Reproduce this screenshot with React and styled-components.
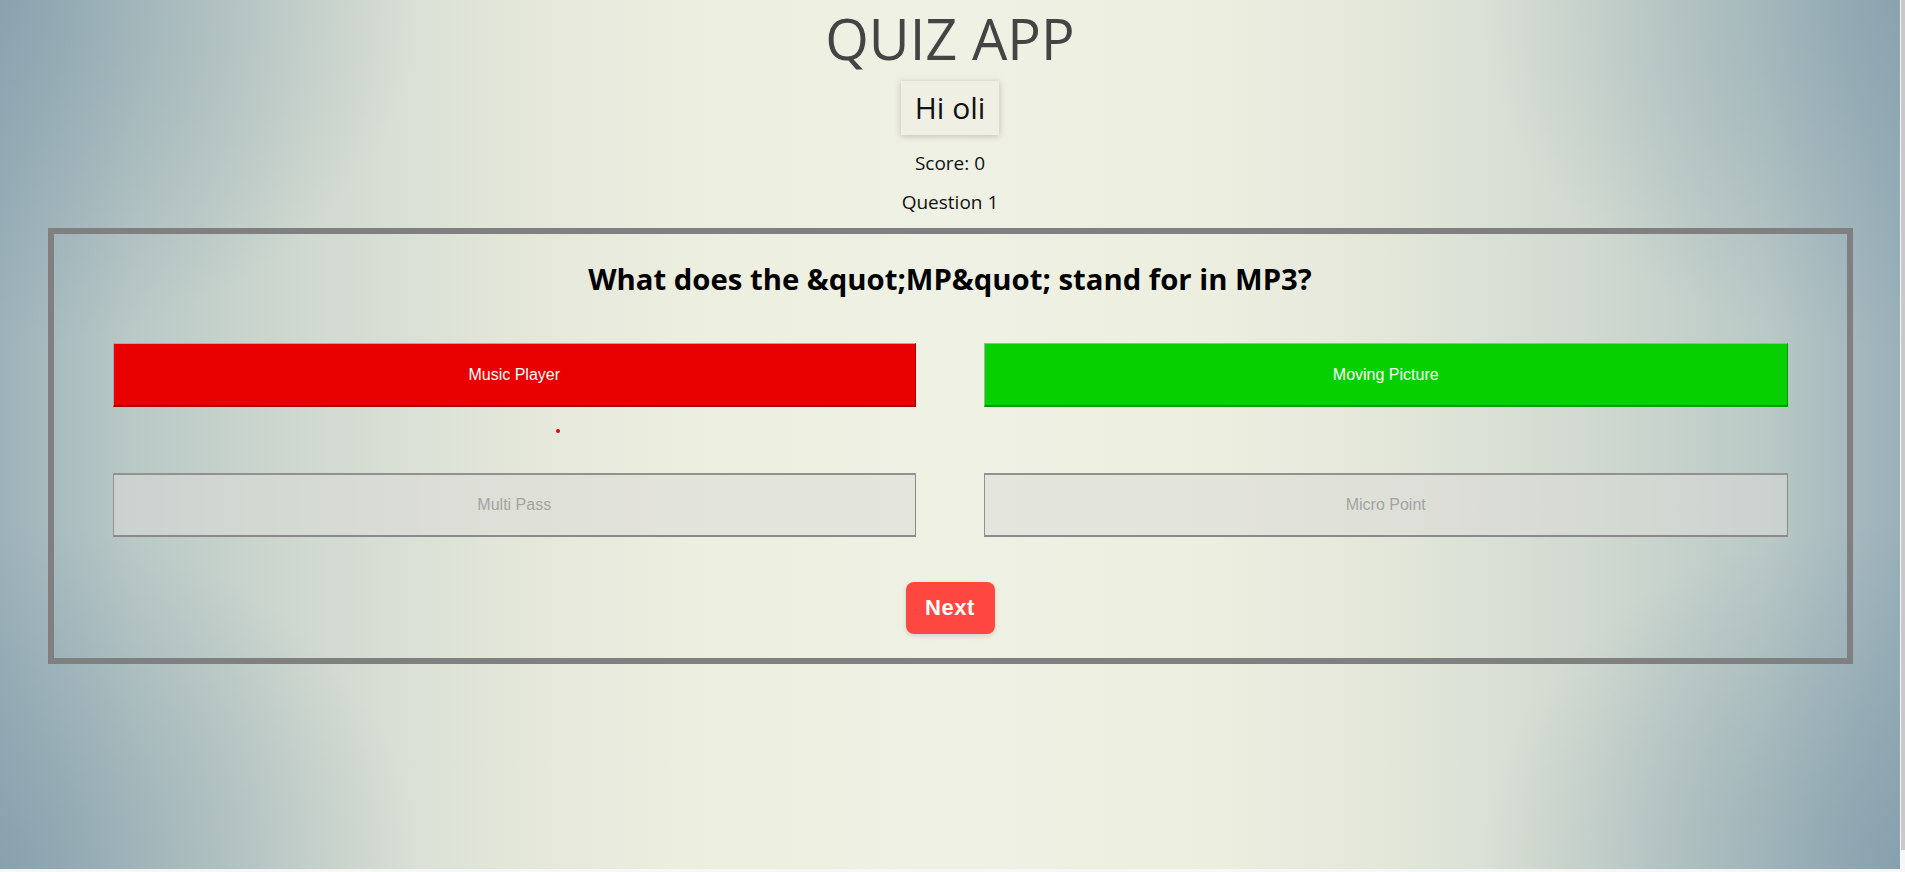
import React from "react";
import styled, { createGlobalStyle } from "styled-components";

const GlobalStyle = createGlobalStyle`
  html {
    background:
      linear-gradient(#c9c9c9, #c9c9c9) right top / 4px 850px no-repeat,
      #f7f7f7;
  }
  body {
    margin: 0;
    font-family: "Open Sans", "Noto Sans", sans-serif;
  }
`;

const Page = styled.main`
  height: 869px;
  margin-right: 5px;
  display: flex;
  flex-direction: column;
  align-items: center;
  background:
    radial-gradient(ellipse 22% 40% at 0% 0%, rgba(122, 150, 166, 0.55), transparent),
    radial-gradient(ellipse 22% 40% at 0% 100%, rgba(122, 150, 166, 0.6), transparent),
    radial-gradient(ellipse 22% 40% at 100% 0%, rgba(122, 150, 166, 0.5), transparent),
    radial-gradient(ellipse 22% 40% at 100% 100%, rgba(122, 150, 166, 0.6), transparent),
    linear-gradient(
      to right,
      #9db2ba 0%,
      #b9c9c6 7%,
      #d0d9d0 16%,
      #e3e7da 27%,
      #eceedf 36%,
      #eff1e4 50%,
      #eceedf 64%,
      #e3e7da 73%,
      #d0d9d0 84%,
      #b9c9c6 93%,
      #9bb0b9 100%
    );
`;

const Title = styled.h1`
  margin: 0;
  font-size: 56px;
  font-weight: 400;
  line-height: 77px;
  color: #444;
`;

const Greeting = styled.div`
  margin-top: 4px;
  padding: 8px 14px;
  font-size: 30px;
  line-height: 38px;
  color: #111;
  background: #efefe4;
  box-shadow: 0 1px 6px rgba(80, 60, 40, 0.28);
`;

const Info = styled.p`
  margin: ${(p) => (p.$first ? "16px" : "15px")} 0 0;
  font-size: 19px;
  line-height: 24px;
  color: #111;
`;

const QuizBox = styled.section`
  box-sizing: border-box;
  width: 95%;
  margin-top: 14px;
  border: 6px solid #808080;
  padding: 27px 59px 24px;
  display: flex;
  flex-direction: column;
  align-items: center;
`;

const Question = styled.h2`
  align-self: stretch;
  margin: 0;
  font-size: 29.3px;
  line-height: 36px;
  font-weight: 700;
  color: #000;
  text-align: center;
`;

const Answers = styled.div`
  align-self: stretch;
  margin-top: 46px;
  display: grid;
  grid-template-columns: 1fr 1fr;
  column-gap: 68px;
`;

const Cell = styled.div`
  display: flex;
  flex-direction: column;
  min-width: 0;
`;

const tones = {
  wrong: { bg: "#e80000", light: "#a9a9a9", dark: "#b00000", text: "#fff" },
  right: { bg: "#06d000", light: "#a9a9a9", dark: "#059a05", text: "#fff" },
  idle: { bg: "rgba(218, 219, 215, 0.55)", light: "#929292", dark: "#8a8a8a", text: "#a3a3a3" },
};

const Answer = styled.button`
  box-sizing: border-box;
  height: 64px;
  width: 100%;
  padding: 0;
  font-family: "Liberation Sans", Arial, sans-serif;
  font-size: 16px;
  color: ${(p) => tones[p.$tone].text};
  background: ${(p) => tones[p.$tone].bg};
  border-style: solid;
  border-width: ${(p) => (p.$tone === "idle" ? "2px 1px 2px 1px" : "1px 1px 2px 1px")};
  border-color: ${(p) => tones[p.$tone].light} ${(p) => tones[p.$tone].dark}
    ${(p) => tones[p.$tone].dark} ${(p) => tones[p.$tone].light};
  cursor: pointer;
`;

const Feedback = styled.div`
  height: 66px;
  box-sizing: border-box;
  padding: 22px 0 0 443px;
`;

const Dot = styled.span`
  display: block;
  width: 4px;
  height: 4px;
  border-radius: 50%;
  background: #e00000;
`;

const NextButton = styled.button`
  margin-top: 45px;
  width: 89px;
  height: 52px;
  padding: 0;
  border: none;
  border-radius: 8px;
  background: #ff4742;
  color: #fff;
  font-family: "Liberation Sans", Arial, sans-serif;
  font-size: 22px;
  font-weight: 900;
  letter-spacing: 0.6px;
  box-shadow: 0 2px 5px rgba(0, 0, 0, 0.12);
  cursor: pointer;
`;

const answers = [
  { text: "Music Player", tone: "wrong", dot: true },
  { text: "Moving Picture", tone: "right" },
  { text: "Multi Pass", tone: "idle" },
  { text: "Micro Point", tone: "idle" },
];

export default function App() {
  return (
    <>
      <GlobalStyle />
      <Page>
        <Title>QUIZ APP</Title>
        <Greeting>Hi oli</Greeting>
        <Info $first>Score: 0</Info>
        <Info>Question 1</Info>
        <QuizBox>
          <Question>What does the &amp;quot;MP&amp;quot; stand for in MP3?</Question>
          <Answers>
            {answers.map((a, i) => (
              <Cell key={a.text}>
                <Answer $tone={a.tone}>{a.text}</Answer>
                {i < 2 && <Feedback>{a.dot && <Dot />}</Feedback>}
              </Cell>
            ))}
          </Answers>
          <NextButton>Next</NextButton>
        </QuizBox>
      </Page>
    </>
  );
}
